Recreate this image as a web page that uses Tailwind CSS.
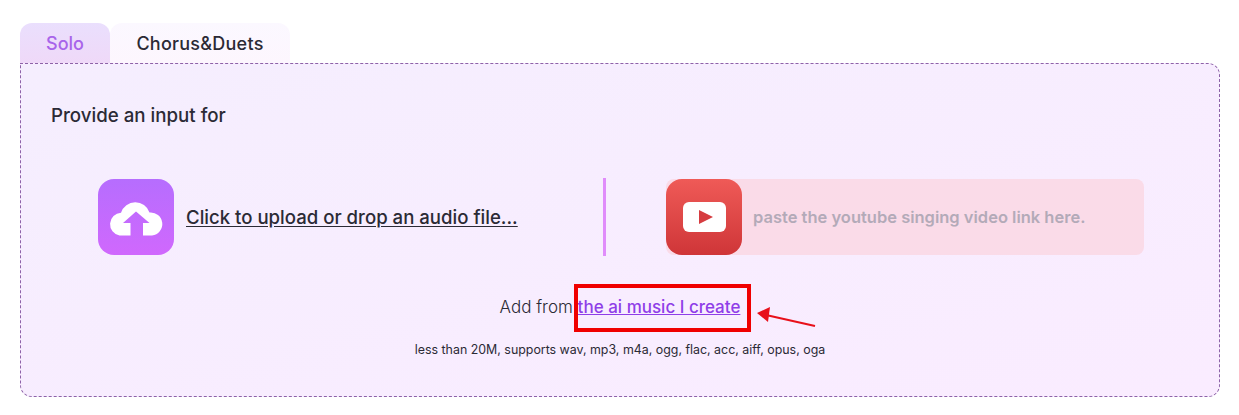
<!DOCTYPE html>
<html lang="en">
  <head>
    <meta charset="UTF-8" />
    <title>Singing input</title>
    <script src="https://cdn.jsdelivr.net/npm/@tailwindcss/browser@4"></script>
  </head>
  <body class="bg-white font-['Inter','Liberation_Sans',sans-serif] text-[#2b2a35]">
    <div class="w-[1239px] h-[415px] pt-[23px] pl-[20px]">
      <!-- tabs -->
      <div class="flex h-[40px]">
        <div class="w-[90px] pt-[1px] flex items-center justify-center rounded-t-[12px] bg-gradient-to-b from-[#eadffd] to-[#efd9f8] text-[#a864ea] text-[18px] font-medium">Solo</div>
        <div class="w-[180px] pt-[1px] flex items-center justify-center rounded-t-[12px] bg-gradient-to-b from-[#fbf8ff] to-[#fdf6fe] text-[18px] tracking-[0.25px] font-medium">Chorus&amp;Duets</div>
      </div>

      <!-- panel -->
      <div class="relative w-[1200px] h-[334px] rounded-b-[12px] rounded-tr-[12px] border border-dashed border-[#8d62a8] bg-gradient-to-br from-[#f5eefe] to-[#faecff] pt-[39px]">
        <h2 class="pl-[30px] text-[18.700px] leading-[26px] font-medium">Provide an input for</h2>

        <div class="flex items-center mt-[50px] h-[76px] pl-[77px]">
          <div class="w-[76px] h-[76px] shrink-0 rounded-[16px] bg-gradient-to-b from-[#b66dfe] to-[#d068fd] flex items-center justify-center">
            <svg width="56" height="37" viewBox="0 0 56 37">
              <path fill="#fff" d="M11.500 36.500A11.500 11.500 0 0 1 13 13.700 15 15 0 0 1 41.500 13.500 11.500 11.500 0 0 1 44 36.500H35V24H41.500L28 12.500 15 24H22.500V36.500Z" />
            </svg>
          </div>
          <a class="ml-[12px] text-[18.600px] leading-[26px] font-medium underline underline-offset-2 whitespace-nowrap">Click to upload or drop an audio file...</a>

          <div class="w-[3px] h-[78px] bg-[#e08cfb] shrink-0 absolute left-[582px]"></div>

          <div class="absolute left-[645px] w-[478px] h-[76px] rounded-[8px] bg-[#fadbe8] flex items-center">
            <div class="w-[76px] h-[76px] shrink-0 rounded-[16px] bg-gradient-to-b from-[#ef5a57] to-[#cf3538] flex items-center justify-center">
              <svg width="43" height="30" viewBox="0 0 43 30">
                <rect width="43" height="30" rx="6" fill="#fff" />
                <path fill="#d63c40" d="M16 8 30 15 16 22z" />
              </svg>
            </div>
            <span class="ml-[11px] text-[16.500px] font-semibold text-[#b3aab8] whitespace-nowrap">paste the youtube singing video link here.</span>
          </div>
        </div>

        <p class="mt-[40px] text-center text-[17px] leading-[24px]">
          <span class="font-light">Add from</span> <a class="text-[#8f3ee8] font-medium underline">the ai music I create</a>
        </p>
        <p class="mt-[22px] text-center text-[12.400px] leading-[18px]">less than 20M, supports wav, mp3, m4a, ogg, flac, acc, aiff, opus, oga</p>

        <!-- annotation drawn over the screenshot -->
        <div class="absolute left-[553px] top-[220px] w-[177px] h-[48px] border-[4px] border-[#f00000]"></div>
        <svg class="absolute left-[733px] top-[242px]" width="64" height="24" viewBox="0 0 64 24">
          <path d="M61 20 12 9" stroke="#e8101a" stroke-width="2" fill="none" />
          <path d="M3 7 16 1 14 16z" fill="#e8101a" />
        </svg>
      </div>
    </div>
  </body>
</html>
